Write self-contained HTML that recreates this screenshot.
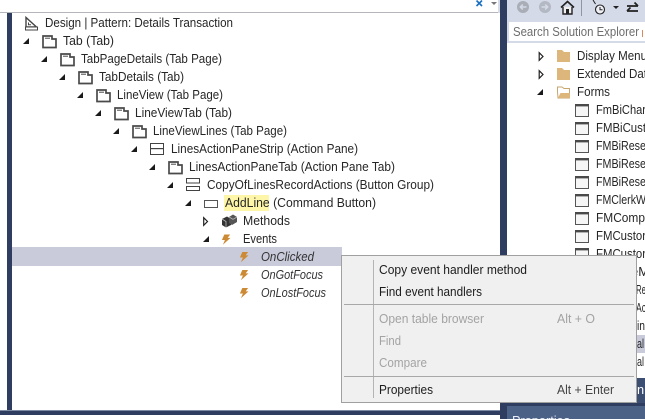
<!DOCTYPE html>
<html><head><meta charset="utf-8"><style>
html,body{margin:0;padding:0;background:#fff;width:645px;height:419px;overflow:hidden}
svg{display:block}
text{font-family:"Liberation Sans",sans-serif;font-size:12.8px;fill:#262626}
.i{font-style:italic;fill:#333}
.m{fill:#1c1c1c}
.d{fill:#a3a3a3}
</style></head><body>
<svg width="645" height="419" viewBox="0 0 645 419" xmlns="http://www.w3.org/2000/svg">
<defs>
<g id="tab"><path d="M1 1V12.5H14V4H10V1Z" fill="#fff" stroke="#4a4a4a" stroke-width="1.7"/><path d="M3 3.2H8" stroke="#4a4a4a" stroke-width="1"/></g>
<g id="exp"><path d="M6 0V6H0Z" fill="#1a1a1a"/></g>
<g id="col"><path d="M.7 .7L4.5 4.5L.7 8.3Z" fill="#fff" stroke="#222" stroke-width="1.2"/></g>
<g id="bolt"><path d="M2.8 0H8.6L6.2 3.4H9L1.4 10.2L3.4 5.5H.4Z" fill="#cc8a35"/></g>
<g id="form"><rect x=".5" y=".5" width="13" height="12" fill="#f6f6f6" stroke="#555"/><rect x="0" y="0" width="14" height="2.4" fill="#4a4a4a"/></g>
</defs>

<rect width="645" height="419" fill="#fff"/>
<rect x="0" y="12" width="500" height="1" fill="#b4b6bb"/>
<rect x="7" y="13" width="5" height="398" fill="#2f3e60"/>
<rect x="0" y="410" width="500" height="1" fill="#7d8aa3"/>
<rect x="0" y="411" width="500" height="4" fill="#2f3e60"/>

<path d="M476.5 .5L482 6M482 .5L476.5 6" stroke="#1a6fc0" stroke-width="1.6" fill="none"/>
<path d="M491 2H497L494 5Z" fill="#777"/>
<rect x="498" y="0" width="2" height="13" fill="#d8dce6"/>

<!-- right panel -->
<rect x="500" y="0" width="7" height="419" fill="#2f3e60"/>
<rect x="507" y="0" width="138" height="43" fill="#d4dae8"/>
<rect x="509" y="22" width="136" height="19" fill="#fff"/>
<rect x="507" y="43" width="138" height="335" fill="#fff"/>
<rect x="507" y="335" width="138" height="18" fill="#c9cbdb"/>
<rect x="507" y="378" width="138" height="25" fill="#3c4e72"/>
<rect x="500" y="403" width="145" height="16" fill="#2f3e60"/>
<rect x="507" y="406" width="138" height="13" fill="#4c6186"/>
<text x="512" y="425" style="fill:#e8ecf4" textLength="58" lengthAdjust="spacingAndGlyphs">Properties</text>

<!-- toolbar -->
<circle cx="523" cy="7" r="6" fill="#a9adb6"/><path d="M526.5 7H520.5M522.8 4.6L520.3 7L522.8 9.4" stroke="#d4dae8" stroke-width="1.5" fill="none"/>
<circle cx="545" cy="7" r="6" fill="#b3b8c3"/><path d="M541.5 7H547.5M545.2 4.6L547.7 7L545.2 9.4" stroke="#d4dae8" stroke-width="1.5" fill="none"/>
<path d="M561 7.5L567.5 1.5L574 7.5" stroke="#222" stroke-width="1.6" fill="none"/>
<path d="M563 7V14H572V7" stroke="#222" stroke-width="1.4" fill="#eee"/><rect x="566" y="9" width="3" height="5" fill="#222"/>
<rect x="581" y="0" width="1" height="16" fill="#8f95a3"/>
<circle cx="600" cy="9.5" r="4.5" fill="#eef0f5" stroke="#222" stroke-width="1.1"/><path d="M600 7V9.8H602.5M593 0L595.5 4" stroke="#222" stroke-width="1" fill="none"/>
<path d="M613 6H619L616 9Z" fill="#222"/>
<path d="M627 5H638M634.5 1.5L638 5M638 10H627M630.5 6.5L627 10" stroke="#222" stroke-width="1.7" fill="none" transform="translate(0,1)"/>

<text x="513" y="36" style="fill:#6d6d6d" textLength="126" lengthAdjust="spacingAndGlyphs">Search Solution Explorer</text>
<rect x="642" y="30" width="1" height="7" fill="#d98a5c"/>

<!-- right tree -->
<use href="#col" x="538.5" y="52"/><use href="#col" x="538.5" y="70"/><use href="#exp" x="537" y="89"/>
<path d="M557 50H562L564 52H570V62H557Z" fill="#dcb67a"/>
<path d="M557 68H562L564 70H570V80H557Z" fill="#dcb67a"/>
<path d="M557.5 92V87H562L564 88.5H569.5V98H558Z" fill="#fff" stroke="#c9a66e"/><path d="M558 98L560.5 93H570V98Z" fill="#dcb67a"/>
<text x="577" y="60" textLength="70" lengthAdjust="spacingAndGlyphs">Display Menu</text>
<text x="577" y="78" textLength="70" lengthAdjust="spacingAndGlyphs">Extended Dat</text>
<text x="577" y="96" textLength="33" lengthAdjust="spacingAndGlyphs">Forms</text>
<use href="#form" x="575" y="104"/><use href="#form" x="575" y="122"/><use href="#form" x="575" y="140"/><use href="#form" x="575" y="158"/><use href="#form" x="575" y="176"/><use href="#form" x="575" y="194"/><use href="#form" x="575" y="212"/><use href="#form" x="575" y="230"/><use href="#form" x="575" y="248"/>
<text x="596" y="114" textLength="50" lengthAdjust="spacingAndGlyphs">FmBiChar</text>
<text x="596" y="132" textLength="50" lengthAdjust="spacingAndGlyphs">FMBiCust</text>
<text x="596" y="150" textLength="50" lengthAdjust="spacingAndGlyphs">FMBiRese</text>
<text x="596" y="168" textLength="50" lengthAdjust="spacingAndGlyphs">FMBiRese</text>
<text x="596" y="186" textLength="50" lengthAdjust="spacingAndGlyphs">FMBiRese</text>
<text x="596" y="204" textLength="50" lengthAdjust="spacingAndGlyphs">FMClerkW</text>
<text x="596" y="222" textLength="49" lengthAdjust="spacingAndGlyphs">FMComp</text>
<text x="596" y="240" textLength="50" lengthAdjust="spacingAndGlyphs">FMCustor</text>
<text x="596" y="258" textLength="50" lengthAdjust="spacingAndGlyphs">FMCustor</text>
<text x="631" y="276" textLength="18" lengthAdjust="spacingAndGlyphs">eM</text>
<text x="636" y="294" textLength="10" lengthAdjust="spacingAndGlyphs">Re</text>
<text x="636" y="312" textLength="10" lengthAdjust="spacingAndGlyphs">Ac</text>
<text x="637" y="330" textLength="8" lengthAdjust="spacingAndGlyphs">in</text>
<text x="637" y="348" textLength="7" lengthAdjust="spacingAndGlyphs">al</text>
<text x="637" y="366" textLength="7" lengthAdjust="spacingAndGlyphs">al</text>
<text x="637" y="394" style="fill:#fff">n</text>

<!-- left tree -->
<path d="M26 17.5V27H36.5Z" fill="#fff" stroke="#444" stroke-width="1.4"/><path d="M28.5 22.5V24.8H31" fill="none" stroke="#444"/>
<rect x="25.5" y="27" width="12" height="3" fill="#fff" stroke="#444" stroke-width="1"/>
<text x="45" y="27" textLength="188" lengthAdjust="spacingAndGlyphs">Design | Pattern: Details Transaction</text>

<use href="#exp" x="23" y="38"/><use href="#tab" x="42" y="35"/>
<text x="63" y="45" textLength="51" lengthAdjust="spacingAndGlyphs">Tab (Tab)</text>
<use href="#exp" x="41" y="56"/><use href="#tab" x="60" y="53"/>
<text x="81" y="63" textLength="141" lengthAdjust="spacingAndGlyphs">TabPageDetails (Tab Page)</text>
<use href="#exp" x="59" y="74"/><use href="#tab" x="78" y="71"/>
<text x="99" y="81" textLength="85" lengthAdjust="spacingAndGlyphs">TabDetails (Tab)</text>
<use href="#exp" x="77" y="92"/><use href="#tab" x="96" y="89"/>
<text x="117" y="99" textLength="106" lengthAdjust="spacingAndGlyphs">LineView (Tab Page)</text>
<use href="#exp" x="95" y="110"/><use href="#tab" x="114" y="107"/>
<text x="135" y="117" textLength="97" lengthAdjust="spacingAndGlyphs">LineViewTab (Tab)</text>
<use href="#exp" x="113" y="128"/><use href="#tab" x="132" y="125"/>
<text x="153" y="135" textLength="134" lengthAdjust="spacingAndGlyphs">LineViewLines (Tab Page)</text>
<use href="#exp" x="131" y="146"/>
<rect x="150.5" y="143.5" width="13" height="11" fill="#fff" stroke="#424242"/><rect x="150" y="148" width="14" height="1.2" fill="#424242"/>
<text x="171" y="153" textLength="187" lengthAdjust="spacingAndGlyphs">LinesActionPaneStrip (Action Pane)</text>
<use href="#exp" x="149" y="164"/><use href="#tab" x="168" y="161"/>
<text x="189" y="171" textLength="206" lengthAdjust="spacingAndGlyphs">LinesActionPaneTab (Action Pane Tab)</text>
<use href="#exp" x="167" y="182"/>
<rect x="186.5" y="178.5" width="13" height="4.5" fill="#fff" stroke="#424242"/><rect x="186.5" y="186.5" width="13" height="4" fill="#fff" stroke="#424242"/>
<text x="207" y="189" textLength="227" lengthAdjust="spacingAndGlyphs">CopyOfLinesRecordActions (Button Group)</text>
<use href="#exp" x="185" y="200"/>
<rect x="204.5" y="200.5" width="13" height="7" fill="#fff" stroke="#555"/>
<rect x="224" y="195" width="45" height="16" fill="#fdf6a8"/>
<text x="225" y="207" textLength="151" lengthAdjust="spacingAndGlyphs">AddLine (Command Button)</text>
<use href="#col" x="203" y="217"/>
<path d="M222 219L227 216.5L231 219V225L226 227.5L222 225Z" fill="#333"/><path d="M229 217L233 214.5L237 217V222L232 225L229 223Z" fill="#555"/><path d="M222 219L226 221.5V227.5" stroke="#bbb" stroke-width=".8" fill="none"/><path d="M229 217L233 219.3L237 217" stroke="#bbb" stroke-width=".8" fill="none"/>
<text x="243" y="225" textLength="47" lengthAdjust="spacingAndGlyphs">Methods</text>
<use href="#exp" x="203" y="236"/><use href="#bolt" x="221.5" y="234.5"/>
<text x="243" y="243" textLength="34" lengthAdjust="spacingAndGlyphs">Events</text>

<rect x="12" y="247" width="330" height="19" fill="#c9cbdb"/>
<use href="#bolt" x="239.5" y="252"/><use href="#bolt" x="239.5" y="270"/><use href="#bolt" x="239.5" y="288"/>
<text class="i" x="261" y="261" textLength="53" lengthAdjust="spacingAndGlyphs">OnClicked</text>
<text class="i" x="261" y="279" textLength="62" lengthAdjust="spacingAndGlyphs">OnGotFocus</text>
<text class="i" x="261" y="297" textLength="65" lengthAdjust="spacingAndGlyphs">OnLostFocus</text>

<!-- context menu -->
<rect x="341.5" y="255.5" width="295" height="147" fill="#f0f0f0" stroke="#a0a0a0"/>
<rect x="373" y="260" width="1" height="138" fill="#b4b4b4"/>
<rect x="344" y="304" width="290" height="1" fill="#a8a8a8"/>
<rect x="344" y="376" width="290" height="1" fill="#a8a8a8"/>
<text class="m" x="379" y="274" textLength="148" lengthAdjust="spacingAndGlyphs">Copy event handler method</text>
<text class="m" x="379" y="296" textLength="103" lengthAdjust="spacingAndGlyphs">Find event handlers</text>
<text class="d" x="379" y="323" textLength="105" lengthAdjust="spacingAndGlyphs">Open table browser</text>
<text class="d" x="557" y="323" textLength="38" lengthAdjust="spacingAndGlyphs">Alt + O</text>
<text class="d" x="379" y="345" textLength="22" lengthAdjust="spacingAndGlyphs">Find</text>
<text class="d" x="379" y="367" textLength="48" lengthAdjust="spacingAndGlyphs">Compare</text>
<text class="m" x="379" y="394" textLength="54" lengthAdjust="spacingAndGlyphs">Properties</text>
<text class="m" x="557" y="394" style="fill:#444" textLength="57" lengthAdjust="spacingAndGlyphs">Alt + Enter</text>
</svg>
</body></html>
